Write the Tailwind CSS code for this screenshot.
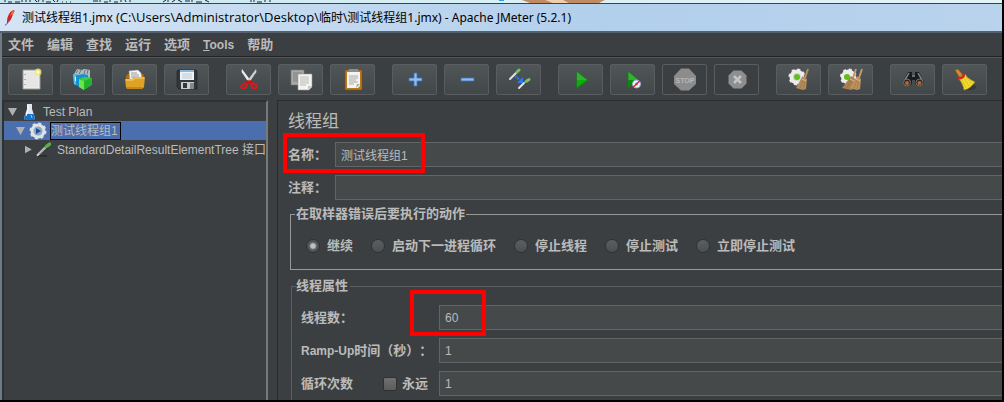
<!DOCTYPE html>
<html lang="zh-CN">

<head>
    <meta charset="UTF-8">
    <meta name="viewport" content="width=device-width, initial-scale=1.0">
    <script src="https://cdn.jsdelivr.net/npm/@tailwindcss/browser@4"></script>
    <title>Apache JMeter (5.2.1)</title>
</head>

<body class="h-screen overflow-hidden flex flex-col bg-[#3c3f41] border-r-2 border-b-2 border-black font-['Liberation_Sans','Noto_Sans_CJK_SC',sans-serif] text-[12px] text-[#bbbbbb]">

    <!-- desktop behind the window -->
    <div class="h-[3px] shrink-0 overflow-hidden flex items-end gap-5 bg-linear-to-r from-[#c5e6ef] via-[#d9f0f5] to-[#e4f3f6] text-black" aria-hidden="true">
        <svg class="w-full h-[3px]" preserveAspectRatio="xMinYMin slice" viewBox="0 0 1002 3">
            <path d="M5 0v2M8 2h4M15 2h5M22 0v2M26 0v2M30 0v2M35 0l2 2M39 0l-1 2M43 0v2M46 2h5M53 0l2 2M58 0l-1 2M62 2h1M66 2h1M70 2h1M93 1h5M100 0v2M104 2h4M110 0v2M114 2h4M121 0v2M125 0l1 2M130 0v2M163 2l3-2M168 0v2M172 2l3-2M178 0l4 2M185 1h5M192 0v2M196 2h6M205 0l4 2M251 0v2M254 0v2M257 2h5M265 0v2M270 0v2" stroke="#223" fill="none" />
            <path d="M522 0h83l-6 3h-69z" fill="#c08a62" />
            <path d="M545 0h18l6 3h-16z" fill="#efd0ae" />
            <path d="M499 0h5v1h-5z" fill="#1ea0f0" />
        </svg>
    </div>

    <header class="h-[30px] shrink-0 flex items-center gap-1 border-t border-b-2 border-t-[#39434d] border-b-[#56626f] bg-linear-to-r from-[#d5e4f4] via-[#b2cfec] via-60% to-[#b9d3ec] pl-0.5 text-[12px] text-black font-['Noto_Sans','Noto_Sans_CJK_SC',sans-serif]">
        <svg class="w-4 h-5" viewBox="0 0 16 20">
            <path d="M5 12C6 7 8 3 12 2c1 1 0 2-1 4-1 3-2 6-4 8z" fill="#d22128" />
            <path d="M8 8c1-3 2-5 4-6 1 1 0 2-1 4z" fill="#f0702c" />
            <path d="M5 12l2 2-2 1z" fill="#8b2668" />
            <path d="M3 17c1 0 2-1 3-3" stroke="#6d2e80" fill="none" />
        </svg>
        <h1 class="whitespace-nowrap">测试线程组1.jmx <span class="text-[13px] font-['Open_Sans']">(C:\Users\Administrator\Desktop\</span>临时\测试线程组1.jmx) - Apache JMeter (5.2.1)</h1>
    </header>

    <div class="flex-1 min-h-0 flex flex-col border-l-2 border-[#6d7b84]">
        <nav class="h-6 shrink-0 flex items-center gap-[13px] pl-1.5 border-b border-[#242424] text-[13px] font-bold whitespace-nowrap">
            <button>文件</button>
            <button>编辑</button>
            <button>查找</button>
            <button>运行</button>
            <button>选项</button>
            <button class="text-[12px]"><span class="underline">T</span>ools</button>
            <button>帮助</button>
        </nav>

        <div class="h-[43px] shrink-0 flex items-start gap-[17px] pl-1.5 pt-1.5 border-t border-[#565656]">
            <div class="flex gap-[7px]">
                <button aria-label="新建" class="w-[45px] h-[31px] flex items-center justify-center rounded-xs border border-[#595d5f] bg-linear-to-b from-[#505658] to-[#42474a]">
                    <svg class="w-6 h-6" viewBox="0 0 24 24">
                        <path d="M4 2h17v19H4z" fill="#f1f1f1" stroke="#999" />
                        <path d="M5.500 3.500h14v16h-14z" fill="#e6e6e6" />
                        <path d="M6 6v1M6 11v1M6 16v1" stroke="#777" />
                        <circle cx="19" cy="4" r="3.500" fill="#f4e76a" opacity=".8" />
                        <circle cx="19" cy="4" r="1.500" fill="#fffde0" />
                    </svg>
                </button>
                <button aria-label="模板" class="w-[45px] h-[31px] flex items-center justify-center rounded-xs border border-[#595d5f] bg-linear-to-b from-[#505658] to-[#42474a]">
                    <svg class="w-6 h-6" viewBox="0 0 24 24">
                        <path d="M3 6l3-5 5 1 2-1 6 1v8H5z" fill="#aebbc2" />
                        <path d="M5 5l2-3M8 6l2-4M13 6l1-4M16 6l1-4" stroke="#69757c" />
                        <path d="M2 6l5 1 5-1 5 1v6l-9 6-5-3z" fill="#1591cf" />
                        <path d="M2 6l3 1v10l-2-1z" fill="#55c4ee" />
                        <path d="M4 9h1v4H4z" fill="#e5f8ff" />
                        <path d="M8 11l6-2 7 1v7l-8 5-5-3z" fill="#22b32e" />
                        <path d="M8 11l5 2v9l-5-3z" fill="#6ee44c" />
                        <path d="M8 11l6-2 7 1-8 3z" fill="#3dcc3d" />
                    </svg>
                </button>
                <button aria-label="打开" class="w-[45px] h-[31px] flex items-center justify-center rounded-xs border border-[#595d5f] bg-linear-to-b from-[#505658] to-[#42474a]">
                    <svg class="w-6 h-6" viewBox="0 0 24 24">
                        <path d="M3 8l2-2h15l1 2v11H3z" fill="#a96f0c" />
                        <path d="M6 3l9-1 3 3 1 7H7z" fill="#f5f5f5" stroke="#aaa" stroke-width=".5" />
                        <path d="M8 5h6M8 7h8M8 9h8" stroke="#9a9a9a" />
                        <path d="M2 11h7l2-2h11l-1 10-2 2H4l-1-2z" fill="#dfa126" />
                        <path d="M3 12h7l2-2h9" stroke="#f8d273" fill="none" />
                        <path d="M4 20h15" stroke="#a96f0c" />
                    </svg>
                </button>
                <button aria-label="保存" class="w-[45px] h-[31px] flex items-center justify-center rounded-xs border border-[#595d5f] bg-linear-to-b from-[#505658] to-[#42474a]">
                    <svg class="w-6 h-6" viewBox="0 0 24 24">
                        <path d="M2 3l1-1h18l1 1v18H4l-2-2z" fill="#343638" stroke="#1d1e20" stroke-width=".6" />
                        <path d="M5 2h14v10H5z" fill="#edf3f8" />
                        <path d="M5 2h14v2H5z" fill="#8db6dd" />
                        <path d="M7 6h10M7 8h10M7 10h10" stroke="#b4bcc4" stroke-width=".8" />
                        <path d="M6 14h13v7H6z" fill="#c8cbce" />
                        <path d="M8 15h4v5H8z" fill="#33373b" />
                        <path d="M15 15h4v6h-4z" fill="#84888c" />
                    </svg>
                </button>
            </div>

            <div class="flex gap-[7px]">
                <button aria-label="剪切" class="w-[45px] h-[31px] flex items-center justify-center rounded-xs border border-[#595d5f] bg-linear-to-b from-[#505658] to-[#42474a]">
                    <svg class="w-6 h-6" viewBox="0 0 24 24">
                        <path d="M5 1c-1 3 0 4 1 5l6 9 2-2z" fill="#ededed" />
                        <path d="M19 1c1 3 0 4-1 5l-6 9-2-2z" fill="#cfcfcf" />
                        <path d="M12 13l-4 3M12 13l4 3" stroke="#c81515" stroke-width="3" />
                        <ellipse cx="7" cy="18" rx="3" ry="2" fill="none" stroke="#d91a1a" stroke-width="2" transform="rotate(-30 7 18)" />
                        <ellipse cx="17" cy="18" rx="3" ry="2" fill="none" stroke="#d91a1a" stroke-width="2" transform="rotate(30 17 18)" />
                    </svg>
                </button>
                <button aria-label="复制" class="w-[45px] h-[31px] flex items-center justify-center rounded-xs border border-[#595d5f] bg-linear-to-b from-[#505658] to-[#42474a]">
                    <svg class="w-6 h-6" viewBox="0 0 24 24">
                        <path d="M2 2h13v15H2z" fill="#a9aaa8" stroke="#777" stroke-width=".6" />
                        <path d="M4 5h9M4 7h9M4 9h9M4 11h5M4 13h5" stroke="#747674" stroke-width=".8" />
                        <path d="M9 6h14v13l-3 3H9z" fill="#f4f4f2" stroke="#999" stroke-width=".6" />
                        <path d="M11 9h9M11 11h9M11 13h9M11 15h9M11 17h6" stroke="#aaa" stroke-width=".8" />
                        <path d="M23 18h-4v4z" fill="#c5c5c3" />
                    </svg>
                </button>
                <button aria-label="粘贴" class="w-[45px] h-[31px] flex items-center justify-center rounded-xs border border-[#595d5f] bg-linear-to-b from-[#505658] to-[#42474a]">
                    <svg class="w-6 h-6" viewBox="0 0 24 24">
                        <rect x="4" y="2" width="17" height="20" rx="1" fill="#b87820" stroke="#7c4c0c" stroke-width=".6" />
                        <path d="M6 4h13v14l-2 2H6z" fill="#f3f3f1" />
                        <path d="M8 1h9l1 3H7z" fill="#8c8f8c" />
                        <path d="M8 8h9M8 10h9M8 12h7M8 14h9M8 16h5" stroke="#a2a2a2" stroke-width=".9" />
                        <path d="M19 16h-3l-1 4z" fill="#a5a5a3" />
                    </svg>
                </button>
            </div>

            <div class="flex gap-[7px]">
                <button aria-label="全部展开" class="w-[45px] h-[31px] flex items-center justify-center rounded-xs border border-[#595d5f] bg-linear-to-b from-[#505658] to-[#42474a]">
                    <svg class="w-6 h-6" viewBox="0 0 24 24">
                        <path d="M11 5h3v5h5v3h-5v5h-3v-5H6v-3h5z" fill="#8fbdf0" stroke="#3b73ba" stroke-width=".8" />
                    </svg>
                </button>
                <button aria-label="全部折叠" class="w-[45px] h-[31px] flex items-center justify-center rounded-xs border border-[#595d5f] bg-linear-to-b from-[#505658] to-[#42474a]">
                    <svg class="w-6 h-6" viewBox="0 0 24 24">
                        <path d="M6 10h13v3H6z" fill="#8fbdf0" stroke="#3b73ba" stroke-width=".8" />
                    </svg>
                </button>
                <button aria-label="切换" class="w-[45px] h-[31px] flex items-center justify-center rounded-xs border border-[#595d5f] bg-linear-to-b from-[#505658] to-[#42474a]">
                    <svg class="w-6 h-6" viewBox="0 0 24 24">
                        <path d="M3 11l6-6" stroke="#dfe3df" stroke-width="2" stroke-linecap="round" />
                        <path d="M8 3l4 4" stroke="#344a34" />
                        <path d="M10 4l2-2" stroke="#7dbb6a" stroke-width="3" stroke-linecap="round" />
                        <path d="M12 20l5-5" stroke="#dfe3df" stroke-width="2" stroke-linecap="round" />
                        <path d="M16 12l4 4" stroke="#344a34" />
                        <path d="M19 13.500l3-2" stroke="#7dbb6a" stroke-width="3" stroke-linecap="round" />
                        <path d="M8 8l5 4" stroke="#2f7df4" stroke-width="2" stroke-dasharray="2 1" />
                        <path d="M16 9v6h-6z" fill="#2f7df4" />
                    </svg>
                </button>
            </div>

            <div class="flex gap-[7px]">
                <button aria-label="启动" class="w-[45px] h-[31px] flex items-center justify-center rounded-xs border border-[#595d5f] bg-linear-to-b from-[#505658] to-[#42474a]">
                    <svg class="w-6 h-6" viewBox="0 0 24 24">
                        <path d="M7.500 3v18l12-9z" fill="#078c0d" />
                        <path d="M8 4v8h10z" fill="#3aad38" />
                        <path d="M8 12v7l10-7z" fill="#0caf0c" />
                    </svg>
                </button>
                <button aria-label="不停顿开始" class="w-[45px] h-[31px] flex items-center justify-center rounded-xs border border-[#595d5f] bg-linear-to-b from-[#505658] to-[#42474a]">
                    <svg class="w-6 h-6" viewBox="0 0 24 24">
                        <path d="M7 3v17l11-8z" fill="#078c0d" />
                        <path d="M7.500 4v8H17z" fill="#3aad38" />
                        <circle cx="15.500" cy="16" r="4" fill="#f3f6ff" stroke="#8eaedb" />
                        <circle cx="15.500" cy="16" r="1.500" fill="#7599d0" />
                        <path d="M12 19.500l7-7" stroke="#e02323" stroke-width="1.500" />
                    </svg>
                </button>
                <button disabled aria-label="停止" class="w-[45px] h-[31px] flex items-center justify-center rounded-xs border border-[#595d5f]">
                    <svg class="w-6 h-6" viewBox="0 0 24 24">
                        <path d="M8 .500h8L23 8v8l-7 6.500H8L1 16V8z" fill="#8c8c8c" />
                        <text x="12" y="14.500" text-anchor="middle" font-size="7" font-weight="700" fill="#b8b8b8">STOP</text>
                    </svg>
                </button>
                <button disabled aria-label="关闭" class="w-[45px] h-[31px] flex items-center justify-center rounded-xs border border-[#595d5f]">
                    <svg class="w-6 h-6" viewBox="0 0 24 24">
                        <path d="M8.500 2.500h8l5 5v8l-5 5h-8l-5-5v-8z" fill="#8e8e8e" />
                        <path d="M9 8l7 7M16 8l-7 7" stroke="#c4c4c4" stroke-width="2.500" />
                    </svg>
                </button>
            </div>

            <div class="flex gap-[7px]">
                <button aria-label="清除" class="w-[45px] h-[31px] flex items-center justify-center rounded-xs border border-[#595d5f] bg-linear-to-b from-[#505658] to-[#42474a]">
                    <svg class="w-6 h-6" viewBox="0 0 24 24">
                        <circle cx="10" cy="9" r="7.500" fill="#ececec" stroke="#ececec" stroke-width="2" stroke-dasharray="3 2.900" />
                        <circle cx="10" cy="9" r="4" fill="#d4d6d2" />
                        <circle cx="10" cy="9" r="3" fill="#62bd1d" />
                        <path d="M21 1l-3 9" stroke="#b58b5a" stroke-width="2" />
                        <path d="M15.500 8l4.500 3-1 10-3 1-7-2z" fill="#b48a5a" />
                        <path d="M16 12l-3 8M18 12l-2 9" stroke="#94703f" stroke-width=".6" />
                        <path d="M15 11l4 2" stroke="#dfbd88" />
                    </svg>
                </button>
                <button aria-label="清除全部" class="w-[45px] h-[31px] flex items-center justify-center rounded-xs border border-[#595d5f] bg-linear-to-b from-[#505658] to-[#42474a]">
                    <svg class="w-6 h-6" viewBox="0 0 24 24">
                        <circle cx="9.500" cy="9" r="7.500" fill="#ececec" stroke="#ececec" stroke-width="2" stroke-dasharray="3 2.900" />
                        <circle cx="8" cy="9" r="3" fill="#62bd1d" />
                        <path d="M17 1l-3 9M23 1l-3 9" stroke="#c09968" stroke-width="2" />
                        <path d="M12 8l4 3-1 10-3 1-9-2z" fill="#a98050" />
                        <path d="M18 8l4 3-1 10-3 1-7-2z" fill="#bd925f" />
                        <path d="M12 12l-4 8M18 12l-3 8M20 12l-2 9" stroke="#94703f" stroke-width=".6" />
                        <path d="M11 11l4 2M17 11l4 2" stroke="#dfbd88" />
                    </svg>
                </button>
            </div>

            <div class="flex gap-[7px]">
                <button aria-label="查找" class="w-[45px] h-[31px] flex items-center justify-center rounded-xs border border-[#595d5f] bg-linear-to-b from-[#505658] to-[#42474a]">
                    <svg class="w-6 h-6" viewBox="0 0 24 24">
                        <path d="M7 4h4v3h3V4h4l5 10c0 5-8 6-9 1v-3h-3v3c-1 5-9 4-9-1z" fill="#1b1c1e" />
                        <path d="M8 5L4 12M17 5l4 7M11 8h3" stroke="#858b90" stroke-width="1.500" />
                        <circle cx="6" cy="14.500" r="3.500" fill="#30231d" stroke="#777" />
                        <circle cx="18.500" cy="14.500" r="3.500" fill="#30231d" stroke="#777" />
                        <circle cx="6" cy="15" r="2" fill="#b56532" />
                        <circle cx="18.500" cy="15" r="2" fill="#b56532" />
                    </svg>
                </button>
                <button aria-label="重置搜索" class="w-[45px] h-[31px] flex items-center justify-center rounded-xs border border-[#595d5f] bg-linear-to-b from-[#505658] to-[#42474a]">
                    <svg class="w-6 h-6" viewBox="0 0 24 24">
                        <ellipse cx="16" cy="19" rx="7" ry="3" fill="#34383a" />
                        <path d="M2 2l3-1 5 6-4 2z" fill="#d18b30" stroke="#875014" stroke-width=".6" />
                        <path d="M5 10l7-4c2 4 6 6 10 8-3 4-6 7-11 8-1-4-2-8-6-12z" fill="#f0dc31" stroke="#a78c0c" stroke-width=".6" />
                        <path d="M9 12l4 8M11 10l5 8M13 9l6 7" stroke="#c5ac18" stroke-width=".6" />
                        <path d="M5 10c3 1 6-1 6-4" stroke="#d8241c" stroke-width="2.500" fill="none" />
                    </svg>
                </button>
            </div>
        </div>

        <main class="flex-1 min-h-0 flex">
            <!-- test plan tree -->
            <aside class="w-[266px] shrink-0 overflow-hidden border-2 border-b-0 border-l-[#2f3234] border-t-[#2f3234] border-r-[#77797a] whitespace-nowrap">
                <ul>
                    <li class="h-[19px] flex items-center pl-1">
                        <svg class="w-[9px] h-2 mr-1" viewBox="0 0 9 8"><path d="M0 0h9L4.500 8z" fill="#b0b0b0" /></svg>
                        <svg class="w-[18px] h-[18px]" viewBox="0 0 18 18">
                            <path d="M6 1h5v5l3 9-1 2H4l-1-2 3-9z" fill="#dfe8f0" />
                            <path d="M4.500 11h8l1.500 4-1 2H4l-1-2z" fill="#1672cf" />
                            <path d="M7 2v5l-2 6" stroke="#fff" fill="none" />
                            <path d="M10 12l1 3" stroke="#8cc8ff" />
                        </svg>
                        <span class="ml-1">Test Plan</span>
                    </li>
                    <li class="h-[19px] flex items-center pl-3 bg-[#4b6eaf]">
                        <svg class="w-[9px] h-2 mr-1" viewBox="0 0 9 8"><path d="M0 0h9L4.500 8z" fill="#b0b0b0" /></svg>
                        <svg class="w-[18px] h-[18px]" viewBox="0 0 18 18">
                            <circle cx="9" cy="9" r="7.500" fill="#e0e1e3" stroke="#dfe0e2" stroke-width="2" stroke-dasharray="3 2.900" />
                            <circle cx="9" cy="9" r="4.500" fill="#86a8d0" />
                            <path d="M7 6v6l5-3z" fill="#234c83" />
                        </svg>
                        <span class="ml-[3px] h-[18px] leading-4 border border-black pr-0.5">测试线程组1</span>
                    </li>
                    <li class="h-[19px] flex items-center pl-[21px]">
                        <svg class="w-2 h-[9px] mr-1" viewBox="0 0 8 9"><path d="M0 0v9l8-4.500z" fill="#b0b0b0" /></svg>
                        <svg class="w-[18px] h-[18px]" viewBox="0 0 18 18">
                            <path d="M2 16h11" stroke="#292c2d" stroke-width="2" />
                            <path d="M2 15l9-9" stroke="#d3d7d3" stroke-width="2.500" stroke-linecap="round" />
                            <path d="M3 14l7-7" stroke="#89918b" />
                            <path d="M9 3l5 5" stroke="#1f3821" stroke-width="2" />
                            <path d="M12 5l4-3" stroke="#5aad51" stroke-width="4" stroke-linecap="round" />
                        </svg>
                        <span class="ml-1.5">StandardDetailResultElementTree 接口</span>
                    </li>
                </ul>
            </aside>

            <!-- thread group form -->
            <section class="relative flex-1 min-w-0 overflow-hidden ml-[9px] pl-2.5 border-l border-t border-[#2b2b2b]">
                <h2 class="mt-3 h-[18px] leading-[18px] text-[17px]">线程组</h2>

                <div class="mt-[11px] flex items-center">
                    <label for="nombre" class="w-[47px] text-[13px] font-bold whitespace-nowrap">名称：</label>
                    <input id="nombre" type="text" value="测试线程组1" class="flex-1 min-w-0 h-[25px] pl-[5px] bg-[#45494a] border border-r-0 border-[#646464] outline-none">
                </div>
                <div class="mt-2 flex items-center">
                    <label for="comentario" class="w-[47px] text-[13px] font-bold whitespace-nowrap">注释：</label>
                    <input id="comentario" type="text" class="flex-1 min-w-0 h-[25px] pl-[5px] bg-[#45494a] border border-r-0 border-[#646464] outline-none">
                </div>

                <fieldset class="mt-1 ml-0.5 h-[66px] border border-r-0 border-[#999999] text-[13px] font-bold">
                    <legend class="ml-1 px-px leading-5">在取样器错误后要执行的动作</legend>
                    <div class="flex items-center gap-[18px] pl-[15px] pt-3 leading-5 whitespace-nowrap">
                        <label class="flex items-center gap-[7px]"><input type="radio" name="accion" checked class="appearance-none w-3.5 h-3.5 rounded-full border border-[#2f3233] bg-linear-to-b from-[#5b5f61] to-[#4b4f51] checked:bg-[radial-gradient(circle,#c0c0c0_2px,#515557_4px)]">继续</label>
                        <label class="flex items-center gap-[7px]"><input type="radio" name="accion" class="appearance-none w-3.5 h-3.5 rounded-full border border-[#2f3233] bg-linear-to-b from-[#5b5f61] to-[#4b4f51]">启动下一进程循环</label>
                        <label class="flex items-center gap-[7px]"><input type="radio" name="accion" class="appearance-none w-3.5 h-3.5 rounded-full border border-[#2f3233] bg-linear-to-b from-[#5b5f61] to-[#4b4f51]">停止线程</label>
                        <label class="flex items-center gap-[7px]"><input type="radio" name="accion" class="appearance-none w-3.5 h-3.5 rounded-full border border-[#2f3233] bg-linear-to-b from-[#5b5f61] to-[#4b4f51]">停止测试</label>
                        <label class="flex items-center gap-[7px]"><input type="radio" name="accion" class="appearance-none w-3.5 h-3.5 rounded-full border border-[#2f3233] bg-linear-to-b from-[#5b5f61] to-[#4b4f51]">立即停止测试</label>
                    </div>
                </fieldset>

                <fieldset class="mt-1.5 ml-[3px] h-[160px] border border-r-0 border-[#5c5f61] text-[13px] font-bold [text-spacing-trim:space-all]">
                    <legend class="ml-1 pr-0.5 leading-5">线程属性</legend>
                    <div class="flex flex-col gap-2 pl-[9px] pt-[9px]">
                        <div class="flex items-center">
                            <label for="hilos" class="w-[138px]">线程数：</label>
                            <input id="hilos" type="text" value="60" class="flex-1 min-w-0 h-[25px] pl-[5px] bg-[#45494a] border border-r-0 border-[#646464] outline-none text-[12px] font-normal">
                        </div>
                        <div class="flex items-center">
                            <label for="subida" class="w-[138px] whitespace-nowrap"><span class="text-[12px]">Ramp-Up</span>时间（秒）：</label>
                            <input id="subida" type="text" value="1" class="flex-1 min-w-0 h-[25px] pl-[5px] bg-[#45494a] border border-r-0 border-[#646464] outline-none text-[12px] font-normal">
                        </div>
                        <div class="flex items-center">
                            <label for="ciclos" class="w-[82px]">循环次数</label>
                            <label class="w-14 flex items-center gap-[5px]"><input type="checkbox" class="appearance-none w-3.5 h-3.5 rounded-xs border border-[#2f3233] bg-linear-to-b from-[#707070] to-[#5c5c5c]">永远</label>
                            <input id="ciclos" type="text" value="1" class="flex-1 min-w-0 h-[25px] pl-[5px] bg-[#45494a] border border-r-0 border-[#646464] outline-none text-[12px] font-normal">
                        </div>
                    </div>
                </fieldset>

                <!-- marks -->
                <div class="absolute left-[5px] top-8 w-[142px] h-10 border-4 border-[#ff0000] pointer-events-none"></div>
                <div class="absolute left-[132px] top-[189px] w-[76px] h-[46px] border-4 border-[#ff0000] pointer-events-none"></div>
            </section>
        </main>
    </div>
</body>

</html>
